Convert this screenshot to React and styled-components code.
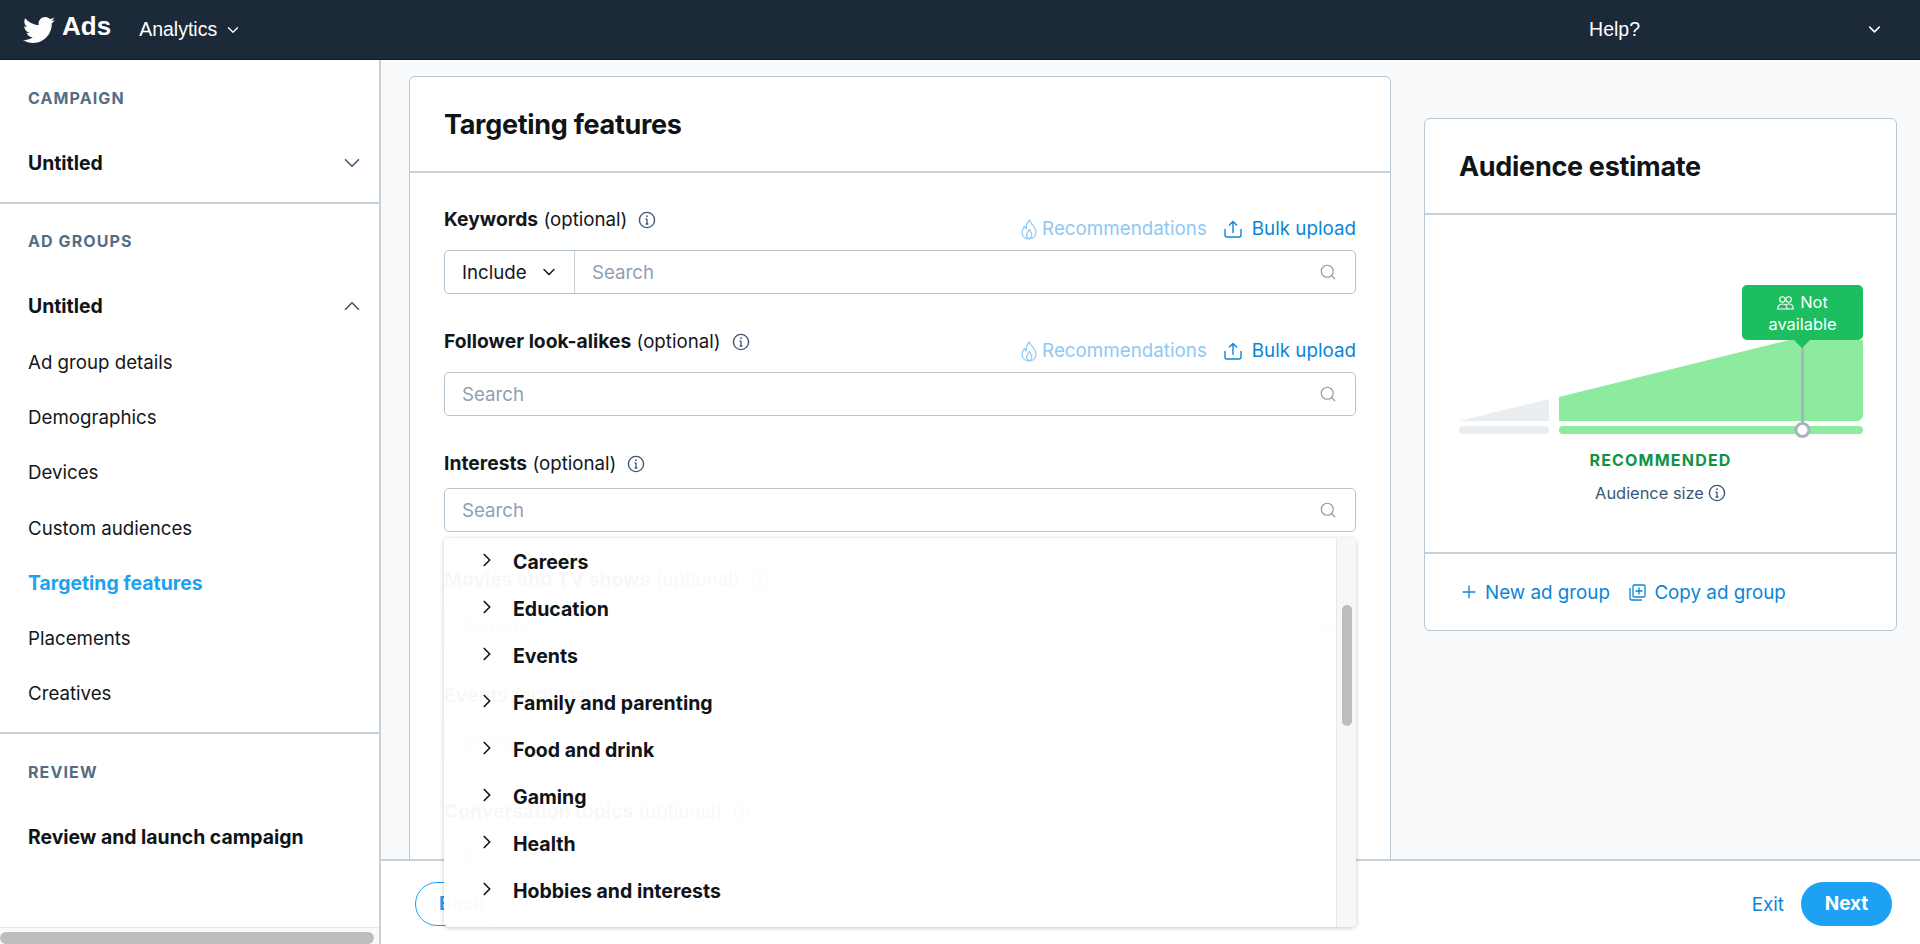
import React from "react";
import styled, { createGlobalStyle } from "styled-components";
import { FaTwitter } from "react-icons/fa";
import { ChevronDown, ChevronUp, ChevronRight, Search as SearchGlyph, Plus } from "lucide-react";

const Global = createGlobalStyle`
  html, body { margin: 0; padding: 0; height: 100%; overflow: hidden; background: #fff; }
  body { font-family: Inter, "Liberation Sans", sans-serif; color: #14171a; }
  #root { height: 100%; }
  * { box-sizing: border-box; }
`;

const Page = styled.div`
  position: relative;
  display: flex;
  flex-direction: column;
  height: 100vh;
  overflow: hidden;
`;

const TopBar = styled.header`
  flex: 0 0 60px;
  display: flex;
  align-items: center;
  background: #1c2938;
  border-bottom: 1px solid #10171f;
  padding: 0 36px 0 23px;
  color: #fff;
  font-family: "Liberation Sans", Arial, sans-serif;
`;

const Brand = styled.div`
  display: flex;
  align-items: center;
  gap: 7px;
  font-size: 26px;
  font-weight: 700;
  margin-right: 28px;
  span { position: relative; top: -3px; }
`;

const TopLink = styled.div`
  display: flex;
  align-items: center;
  font-size: 19.5px;
  gap: 7px;
`;

const TopRight = styled.div`
  margin-left: auto;
  display: flex;
  align-items: center;
  gap: 225px;
`;

const Body = styled.div`
  flex: 1;
  display: flex;
  min-height: 0;
`;

const Sidebar = styled.aside`
  flex: 0 0 381px;
  display: flex;
  flex-direction: column;
  border-right: 2px solid #c6d1da;
  background: #fff;
`;

const SideSection = styled.section`
  padding: ${(p) => p.$top}px 28px ${(p) => p.$bottom}px;
  border-bottom: ${(p) => (p.$last ? "none" : "2px solid #c6d1da")};
`;

const SideLabel = styled.div`
  font-size: 16px;
  line-height: 20px;
  font-weight: 700;
  letter-spacing: 1.1px;
  color: #546d85;
`;

const SideHead = styled.div`
  display: flex;
  align-items: center;
  justify-content: space-between;
  height: 24px;
  margin-top: 43px;
  font-size: 19.4px;
  line-height: 24px;
  font-weight: 700;
  color: #0f1419;
  svg { color: #45607a; margin-right: -14px; }
`;

const NavList = styled.nav`
  margin-top: 17px;
`;

const NavItem = styled.div`
  line-height: 55.2px;
  font-size: ${(p) => (p.$active ? 19.4 : 18.7)}px;
  font-weight: ${(p) => (p.$active ? 700 : 400)};
  color: ${(p) => (p.$active ? "#1da1f2" : "#14171a")};
`;

const SideScroll = styled.div`
  margin-top: auto;
  height: 17px;
  background: #fafafa;
  border-top: 1px solid #e4e8eb;
  padding-top: 4px;
`;

const SideThumb = styled.div`
  width: 374px;
  height: 12px;
  border-radius: 6px;
  background: #bdbdbd;
`;

const MainColumn = styled.main`
  flex: 1;
  display: flex;
  flex-direction: column;
  min-width: 0;
`;

const Canvas = styled.div`
  flex: 1;
  display: flex;
  align-items: flex-start;
  min-height: 0;
  overflow: hidden;
  background: #f7f9fa;
  padding: 16px 0 0 28px;
`;

const FormCard = styled.div`
  flex: 0 0 982px;
  background: #fff;
  border: 1.5px solid #b9c7d3;
  border-radius: 6px;
`;

const CardTitle = styled.h2`
  margin: 0;
  display: flex;
  align-items: center;
  height: 96px;
  padding: 0 34px;
  font-size: 27px;
  font-weight: 700;
  letter-spacing: -0.3px;
  color: #0f1419;
  border-bottom: 2px solid #c6d1da;
`;

const FormBody = styled.div`
  padding: 34px 34px 0;
  height: 800px;
`;

const Field = styled.div`
  margin-bottom: 35px;
`;

const FieldHead = styled.div`
  display: flex;
  justify-content: space-between;
  align-items: flex-start;
  height: ${(p) => (p.$links ? 43 : 37)}px;
`;

const FieldLabel = styled.div`
  display: flex;
  align-items: center;
  gap: 8px;
  font-size: 18.7px;
  line-height: 24px;
  color: #14171a;
  b { font-weight: 700; font-size: 19.3px; }
  svg { margin-left: 3px; color: #3e5670; }
`;

const FieldLinks = styled.div`
  display: flex;
  gap: 17px;
  margin-top: 11px;
  line-height: 22px;
`;

const LinkAction = styled.span`
  display: inline-flex;
  align-items: center;
  gap: ${(p) => p.$gap}px;
  font-size: 18.8px;
  color: ${(p) => (p.$muted ? "#8ec8f4" : "#0a85d9")};
`;

const SearchBox = styled.div`
  display: flex;
  align-items: center;
  height: 44px;
  border: 1.5px solid #b5c3cf;
  border-radius: 5px;
  background: #fff;
`;

const Includer = styled.div`
  flex: 0 0 130px;
  height: 100%;
  display: flex;
  align-items: center;
  justify-content: space-between;
  padding: 0 15px 0 17px;
  border-right: 1.5px solid #c6d1da;
  font-size: 18.7px;
  color: #14171a;
`;

const Placeholder = styled.div`
  flex: 1;
  padding-left: 17px;
  font-size: 18.7px;
  color: #8fa0b0;
`;

const SearchIcon = styled(SearchGlyph)`
  margin-right: 18px;
  color: #8d9aa6;
`;

const SideColumn = styled.div`
  flex: 0 0 473px;
  margin: 42px 0 0 33px;
  background: #fff;
  border: 1.5px solid #b9c7d3;
  border-radius: 6px;
  height: 513px;
  display: flex;
  flex-direction: column;
`;

const Chart = styled.div`
  position: relative;
  flex: 0 0 339px;
  border-bottom: 2px solid #c6d1da;
  display: flex;
  flex-direction: column;
  align-items: center;
`;

const ChartArt = styled.svg`
  flex: 0 0 auto;
  display: block;
  margin-top: 125px;
`;

const Tip = styled.div`
  position: absolute;
  left: 317px;
  top: 70px;
  width: 121px;
  height: 55px;
  border-radius: 5px;
  background: #1cbe60;
  color: #fff;
  font-size: 16.4px;
  line-height: 22px;
  text-align: center;
  padding-top: 6px;
  svg { margin-right: 6px; vertical-align: -2px; }
  &::after {
    content: "";
    position: absolute;
    left: 52px;
    bottom: -8px;
    border-left: 8px solid transparent;
    border-right: 8px solid transparent;
    border-top: 8px solid #1cbe60;
  }
`;

const Recommended = styled.div`
  margin-top: 12px;
  font-size: 16px;
  line-height: 20px;
  font-weight: 700;
  letter-spacing: 1.2px;
  color: #0d9446;
`;

const SizeLabel = styled.div`
  display: flex;
  align-items: center;
  gap: 4px;
  margin-top: 13px;
  font-size: 16.4px;
  line-height: 20px;
  color: #3e5670;
`;

const CardFoot = styled.div`
  display: flex;
  align-items: center;
  gap: 19px;
  flex: 1;
  padding: 0 34px;
`;

const Footer = styled.footer`
  flex: 0 0 85px;
  display: flex;
  align-items: flex-start;
  justify-content: space-between;
  padding: 21px 28px 0 34px;
  border-top: 2px solid #c6d1da;
  background: #fff;
`;

const BackButton = styled.div`
  width: 93px;
  height: 44px;
  border: 1.5px solid #1da1f2;
  border-radius: 22px;
  padding-left: 23px;
  font-size: 19px;
  line-height: 41px;
  font-weight: 700;
  color: #1da1f2;
`;

const FooterRight = styled.div`
  display: flex;
  align-items: center;
  gap: 17px;
`;

const ExitLink = styled.span`
  font-size: 18.8px;
  color: #0a85d9;
`;

const NextButton = styled.div`
  width: 91px;
  height: 44px;
  border-radius: 22px;
  background: #1da1f2;
  color: #fff;
  font-size: 19px;
  font-weight: 700;
  line-height: 44px;
  text-align: center;
`;

const Dropdown = styled.div`
  position: absolute;
  left: 444px;
  top: 538px;
  width: 912px;
  height: 389px;
  display: flex;
  border-radius: 5px;
  background: rgba(255, 255, 255, 0.97);
  box-shadow: 0 1px 5px rgba(0, 0, 0, 0.22);
`;

const OptionList = styled.ul`
  flex: 1;
  list-style: none;
  margin: 0;
  padding: 0;
`;

const Option = styled.li`
  display: flex;
  align-items: center;
  height: 47px;
  padding-left: 32px;
  font-size: 19.5px;
  font-weight: 700;
  color: #0f1419;
  svg { margin-right: 15px; position: relative; top: -2px; color: #0f1419; }
`;

const Track = styled.div`
  flex: 0 0 20px;
  padding: 67px 4px 0 5px;
  border-left: 1px solid #e8e8e8;
  background: rgba(247, 247, 247, 0.96);
  border-radius: 0 5px 5px 0;
`;

const Thumb = styled.div`
  height: 121px;
  border-radius: 6px;
  background: #bdbdbd;
`;

const InfoIcon = ({ size = 18 }) => (
  <svg width={size} height={size} viewBox="0 0 18 18" fill="none" stroke="currentColor" strokeWidth="1.4">
    <circle cx="9" cy="9" r="7.6" />
    <path d="M9 8v5M7.600 13h2.800M7.600 8H9" strokeWidth="1.3" />
    <circle cx="9" cy="5.200" r="0.9" fill="currentColor" stroke="none" />
  </svg>
);

const FlameIcon = () => (
  <svg width="16" height="21" viewBox="0 0 16 21" fill="none" stroke="currentColor" strokeWidth="1.2" strokeLinejoin="round">
    <path d="M8.500 1C9 4.500 15 7.500 15 13.200 15 17.200 12 20 8 20S1 17.200 1 13.400C1 10.600 2.600 8.700 3.600 7.300 4 8.800 4.600 9.600 5.400 10 5 6.600 6.200 3 8.500 1Z" />
    <path d="M8 20C5.800 18.600 5.200 16.400 6 14.400 6.600 13 7.600 12 8.200 10.400 9.600 12.400 11 14 10.800 16.200 10.700 17.800 9.600 19.200 8 20Z" />
  </svg>
);

const UploadIcon = () => (
  <svg width="18" height="18" viewBox="0 0 18 18" fill="none" stroke="currentColor" strokeWidth="1.4" strokeLinecap="round" strokeLinejoin="round">
    <path d="M1 9.500V15a2 2 0 0 0 2 2h12a2 2 0 0 0 2-2V9.500" />
    <path d="M9 12.500V1.600M5.400 5 9 1.400 12.600 5" />
  </svg>
);

const CopyIcon = () => (
  <svg width="17" height="17" viewBox="0 0 17 17" fill="none" stroke="currentColor" strokeWidth="1.3" strokeLinecap="round" strokeLinejoin="round">
    <rect x="4" y="1" width="12" height="12" rx="1.200" />
    <path d="M10 4v6M7 7h6" />
    <path d="M1 4.500V14a2 2 0 0 0 2 2h9.500" />
  </svg>
);

const PeopleIcon = () => (
  <svg width="17" height="14" viewBox="0 0 17 14" fill="none" stroke="currentColor" strokeWidth="1.1">
    <circle cx="5.400" cy="3.500" r="2.700" />
    <circle cx="11.600" cy="3.500" r="2.700" />
    <path d="M.7 13c0-3 1.600-5 4.700-5s4.600 2 4.600 5H.7Z" />
    <path d="M8.600 8.400c.8-.3 1.900-.4 3-.4 3.100 0 4.700 2 4.700 5h-6.300" />
  </svg>
);

const Actions = () => (
  <FieldLinks>
    <LinkAction $muted $gap={5}>
      <FlameIcon />
      Recommendations
    </LinkAction>
    <LinkAction $gap={10}>
      <UploadIcon />
      Bulk upload
    </LinkAction>
  </FieldLinks>
);

const SearchField = ({ label, links, include }) => (
  <Field>
    <FieldHead $links={links}>
      <FieldLabel>
        <span>
          <b>{label}</b> (optional)
        </span>
        <InfoIcon />
      </FieldLabel>
      {links && <Actions />}
    </FieldHead>
    <SearchBox>
      {include && (
        <Includer>
          Include
          <ChevronDown size={20} strokeWidth={1.8} />
        </Includer>
      )}
      <Placeholder>Search</Placeholder>
      <SearchIcon size={18} strokeWidth={1.5} />
    </SearchBox>
  </Field>
);

const navItems = ["Ad group details", "Demographics", "Devices", "Custom audiences", "Targeting features", "Placements", "Creatives"];
const options = ["Careers", "Education", "Events", "Family and parenting", "Food and drink", "Gaming", "Health", "Hobbies and interests"];

export default function App() {
  return (
    <Page>
      <Global />
      <TopBar>
        <Brand>
          <FaTwitter size={32} />
          <span>Ads</span>
        </Brand>
        <TopLink>
          Analytics
          <ChevronDown size={18} strokeWidth={1.8} />
        </TopLink>
        <TopRight>
          <TopLink>Help?</TopLink>
          <ChevronDown size={19} strokeWidth={1.9} />
        </TopRight>
      </TopBar>
      <Body>
        <Sidebar>
          <SideSection $top={28} $bottom={27}>
            <SideLabel>CAMPAIGN</SideLabel>
            <SideHead>
              Untitled
              <ChevronDown size={26} strokeWidth={1.6} />
            </SideHead>
          </SideSection>
          <SideSection $top={27} $bottom={11}>
            <SideLabel>AD GROUPS</SideLabel>
            <SideHead>
              Untitled
              <ChevronUp size={26} strokeWidth={1.6} />
            </SideHead>
            <NavList>
              {navItems.map((item) => (
                <NavItem key={item} $active={item === "Targeting features"}>
                  {item}
                </NavItem>
              ))}
            </NavList>
          </SideSection>
          <SideSection $top={28} $last $bottom={0}>
            <SideLabel>REVIEW</SideLabel>
            <SideHead>Review and launch campaign</SideHead>
          </SideSection>
          <SideScroll>
            <SideThumb />
          </SideScroll>
        </Sidebar>
        <MainColumn>
          <Canvas>
            <FormCard>
              <CardTitle>Targeting features</CardTitle>
              <FormBody>
                <SearchField label="Keywords" links include />
                <SearchField label="Follower look-alikes" links />
                <SearchField label="Interests" />
                <SearchField label="Movies and TV shows" />
                <SearchField label="Events" />
                <SearchField label="Conversation topics" />
              </FormBody>
            </FormCard>
            <SideColumn>
              <CardTitle>Audience estimate</CardTitle>
              <Chart>
                <ChartArt width="404" height="98" viewBox="0 0 404 98">
                  <polygon points="0,81 90,59 90,81" fill="#ebeef0" />
                  <polygon points="100,57 330,0 404,0 404,77 400,81 100,81" fill="#8ceb9f" />
                  <rect x="0" y="86" width="90" height="8" rx="4" fill="#ebeef0" />
                  <rect x="100" y="86" width="304" height="8" rx="4" fill="#8ceb9f" />
                  <rect x="342" y="0" width="3" height="84" fill="#aab2bd" />
                  <circle cx="343.500" cy="90" r="6.500" fill="#fff" stroke="#aab2bd" strokeWidth="3" />
                </ChartArt>
                <Tip>
                  <PeopleIcon />
                  Not
                  <br />
                  available
                </Tip>
                <Recommended>RECOMMENDED</Recommended>
                <SizeLabel>
                  Audience size
                  <InfoIcon />
                </SizeLabel>
              </Chart>
              <CardFoot>
                <LinkAction $gap={6}>
                  <Plus size={20} strokeWidth={1.6} />
                  New ad group
                </LinkAction>
                <LinkAction $gap={8.5}>
                  <CopyIcon />
                  Copy ad group
                </LinkAction>
              </CardFoot>
            </SideColumn>
          </Canvas>
          <Footer>
            <BackButton>Back</BackButton>
            <FooterRight>
              <ExitLink>Exit</ExitLink>
              <NextButton>Next</NextButton>
            </FooterRight>
          </Footer>
        </MainColumn>
      </Body>
      <Dropdown>
        <OptionList>
          {options.map((o) => (
            <Option key={o}>
              <ChevronRight size={22} strokeWidth={1.8} />
              {o}
            </Option>
          ))}
        </OptionList>
        <Track>
          <Thumb />
        </Track>
      </Dropdown>
    </Page>
  );
}
